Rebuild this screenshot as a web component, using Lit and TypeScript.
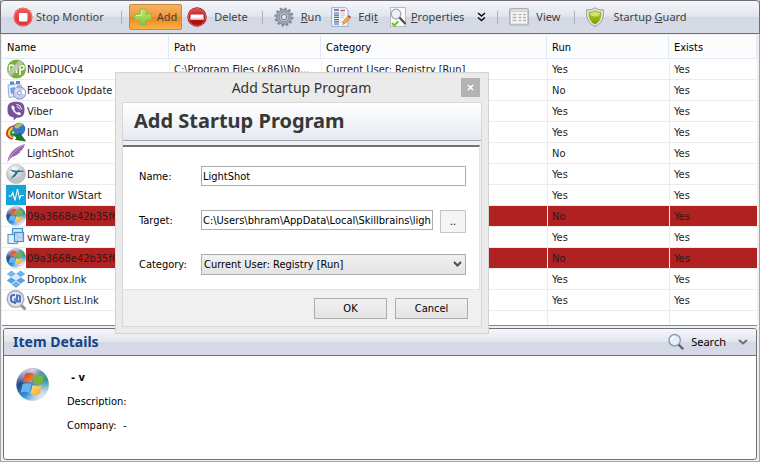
import { LitElement, html, css, svg, nothing, TemplateResult } from "lit";
import { customElement, state } from "lit/decorators.js";
import { classMap } from "lit/directives/class-map.js";

const icon = (size: number, body: TemplateResult) =>
  html`<svg class="icon" width=${size} height=${size} viewBox="0 0 20 20" aria-hidden="true">${body}</svg>`;

const stop = svg`
  <defs><linearGradient id="stop" x2="0" y2="1"><stop offset="0" stop-color="#ee5a5a"/><stop offset="1" stop-color="#d92f33"/></linearGradient></defs>
  <circle cx="10" cy="10" r="9.5" fill="url(#stop)"/><circle cx="10" cy="10" r="8.6" fill="none" stroke="#f08080" stroke-width=".8"/>
  <rect x="6" y="6" width="8.5" height="8.5" rx="1" fill="#fff"/>`;

const plus = svg`
  <defs><linearGradient id="plus" x2="0" y2="1"><stop offset="0" stop-color="#c3e67a"/><stop offset="1" stop-color="#83c834"/></linearGradient></defs>
  <path d="M7 2h6v5h5.500v6H13v5H7v-5H1.500V7H7z" fill="url(#plus)" stroke="#8fb94a" stroke-width="1" stroke-linejoin="round"/>
  <path d="M8.500 3.500v5H3" fill="none" stroke="#d9f2a0" stroke-width="1"/>`;

const remove = svg`
  <defs><linearGradient id="del" x2="0" y2="1"><stop offset="0" stop-color="#e65a5a"/><stop offset=".45" stop-color="#c4161c"/><stop offset="1" stop-color="#a8060c"/></linearGradient></defs>
  <circle cx="10" cy="10" r="9.700" fill="#9e1015"/><circle cx="10" cy="10" r="8.600" fill="url(#del)" stroke="#e88" stroke-width=".6"/>
  <rect x="3.500" y="7.500" width="13" height="5" rx=".6" fill="#fff"/><rect x="3.500" y="10.500" width="13" height="2" fill="#e8dcdc"/>`;

const gear = svg`
  <circle cx="10" cy="10" r="8.300" fill="none" stroke="#858a99" stroke-width="2.600" stroke-dasharray="2.300 2.046"/>
  <circle cx="10" cy="10" r="7.500" fill="#a3a7b4" stroke="#7c8190" stroke-width=".8"/>
  <circle cx="10" cy="10" r="5" fill="#b9bdc9" stroke="#8a8f9e" stroke-width="1"/>
  <circle cx="10" cy="10" r="2.600" fill="#e4e7f0" stroke="#757a8a" stroke-width="1"/>`;

const edit = svg`
  <path d="M.7.700h14l2.300 2.300v16.300H.700z" fill="#f4f9ff" stroke="#8fb0d4"/>
  <path d="M3 3h5" stroke="#5b6f96" stroke-width="1.600"/><path d="M9.500 3.500H14" stroke="#c24a4a" stroke-width="1.400"/>
  <path d="M3 6h5M3 8.200h5M3 10.400h5M3 12.600h5M3 14.800h5M3 17h5" stroke="#4a5f8f" stroke-width="1.200"/>
  <path d="M9.500 6h4.500M9.500 8.200h4.500M9.500 10.400h3M9.500 14.800h4" stroke="#b9c8df" stroke-width="1.200"/>
  <path d="M11.500 17.500l1-3.500 4.800-5.300 2.200 2-5 5.500z" fill="#f5a93a" stroke="#c9792a" stroke-width=".6"/><path d="M17.300 8.700l2.200 2" stroke="#b5563c" stroke-width="1.600"/>`;

const properties = svg`
  <rect x="2.500" y=".500" width="15" height="19" fill="#fafafa" stroke="#b9bbbf"/>
  <circle cx="8" cy="7" r="4.800" fill="#edf3f8" stroke="#a4a8ad" stroke-width="1.300"/>
  <path d="M11.500 10.500l6 6.500" stroke="#4a4a4d" stroke-width="2.200"/>
  <path d="M4 16l2.300 2.500 4-4.300" fill="none" stroke="#6cc02c" stroke-width="2"/>`;

const view = svg`
  <rect x=".5" y="1.500" width="19" height="16.500" rx="1" fill="#c9cacc" stroke="#b1b2b5"/>
  <rect x="2" y="5" width="16" height="11.500" fill="#f8f8f8"/>
  <path d="M2 3.200h16" stroke="#e8e8e8" stroke-width="1.200"/>
  <path d="M3.500 7.500h4M3.500 10.500h4M3.500 13.500h4" stroke="#b4b5b8" stroke-width="1.600"/>
  <path d="M9.500 7.500h3M9.500 10.500h3M9.500 13.500h3M14 7.500h3M14 10.500h3M14 13.500h3" stroke="#b4b5b8" stroke-width="1.300"/>`;

const shield = svg`
  <defs><linearGradient id="shield" x2="0" y2="1"><stop offset="0" stop-color="#c5d94a"/><stop offset=".5" stop-color="#9cba12"/><stop offset="1" stop-color="#7c9a06"/></linearGradient></defs>
  <path d="M9 .8C6.500 2.800 3.500 3 .8 2.800c-1 7 1 13.500 8.200 16.700 7.200-3.200 9.200-9.700 8.200-16.700C14.500 3 11.500 2.800 9 .8z" fill="#e9ebe6" stroke="#8c9093" stroke-width=".9"/>
  <path d="M9 3.500C7 4.800 5 5.200 3 5c-.4 5.500 1.200 9.700 6 12.300 4.800-2.600 6.400-6.800 6-12.300-2 .2-4-.2-6-1.500z" fill="url(#shield)" stroke="#869d1a" stroke-width=".6"/>
  <path d="M4 6.200c2 0 3.500-.5 5-1.300 1.500.8 3 1.300 5 1.300 0 2-3 3.300-5 3.300s-5-1.300-5-3.300z" fill="#e3ee98" opacity=".7"/>`;

const noip = svg`
  <circle cx="10.500" cy="10" r="9.500" fill="#79b13c"/>
  <path d="M3.500 12V7.500c0-2 4-2 4 0V12M10.500 6v8M14 16V8c0-2 4-2 4 .5S15 11 14 11" fill="none" stroke="#fff" stroke-width="1.500"/>
  <path d="M1.500 13.500L13 1.500l4.500 2L5 17.500z" fill="#c3c6c1" opacity=".85"/>`;

const installer = svg`
  <path d="M2 5l10-1.500V16L3 17.500z" fill="#e9f1fa" stroke="#7b98b9" stroke-width=".8"/>
  <path d="M4 1.500h4v3H4zM10 1h4v3h-4z" fill="#4f8de0"/><path d="M4 8l5-1v6l-4 1z" fill="#6da7ea"/>
  <path d="M12 3.500l4 1.500v10l-4 1z" fill="#b2c5dc"/>
  <circle cx="13.500" cy="13" r="6.200" fill="#c8cff2" stroke="#6a78b8" stroke-width=".8"/>
  <path d="M13.500 13L18 9.500a6 6 0 0 1 1 5z" fill="#fff"/><path d="M13.500 13L8 11a6 6 0 0 1 3-3.500z" fill="#e7d9fa"/>
  <circle cx="13.500" cy="13" r="1.800" fill="#fff" stroke="#7080c0" stroke-width=".7"/>`;

const viber = svg`
  <path d="M10 .8c6.500 0 8.500 2.200 8.500 8 0 6-2.500 8-8 8l-2.800 2.800v-3.100C3.200 15.600 1.500 13.700 1.500 8.800c0-5.800 2-8 8.500-8z" fill="#7a509e"/>
  <path d="M6.800 4.200c-1.500.6-1.700 1.800-1 3.300 1.300 2.900 3.400 5 6.200 6.200 1.400.6 2.500.2 3-1.300l-2.300-1.700-1.200 1.100c-1.700-.7-2.800-1.900-3.400-3.500l1-1.200z" fill="#fff"/>
  <path d="M10.500 3.500c3 .2 4.700 2 4.800 5M10.700 5.600c1.700.2 2.500 1.100 2.600 2.700" fill="none" stroke="#fff" stroke-width="1"/>`;

const idman = svg`
  <path d="M0 12C0 6.500 5 2.500 10 3.500L7 8c-2 1-2 4 1 6l-1.500 3.500C3 17.500.5 15 0 12z" fill="#d8362c"/>
  <path d="M2 12c-.5-4 3-7.500 7-7.500l-2 4c-2 1-2 4 1 5.500l-1 2c-3 0-4.700-2-5-4z" fill="#f5cf2a"/>
  <path d="M4 12c-.3-2.500 1-4.500 4-5l-1 2c-1.500 1-1 3 1 4.500l-1 1.500c-1.800-.3-2.800-1.500-3-3z" fill="#2f9a3c"/>
  <circle cx="13" cy="7" r="6.300" fill="#3877c8"/><path d="M8.500 4.500c1.500-3.500 5.500-4 8-2 .5 2-3 1-3.500 3.500-2.500 1-4.500.5-4.500-1.500z" fill="#b5c468"/>
  <path d="M6.500 11.500l6.500 2 .5-2.500 6 8-10-1.500 1.500-1.500z" fill="#14801c" stroke="#0a4f12" stroke-width=".7"/>`;

const feather = svg`
  <path d="M1.500 18.800C2 13 7 4 18.800 1c-.5 3-2 5-3.300 6.500l-1.700.6.6.6c-1.700 2-4 3.500-6.900 4.800-2 1-3.700 2.500-6 5.300z" fill="#9a62b4"/>
  <path d="M2 18.500C5 12 10 6 18 1.500" fill="none" stroke="#cfa6dc" stroke-width="1"/>`;

const dashlane = svg`
  <defs><radialGradient id="dash" cx=".4" cy=".3"><stop offset="0" stop-color="#fff"/><stop offset="1" stop-color="#bfc4c6"/></radialGradient></defs>
  <circle cx="10" cy="10" r="9.500" fill="url(#dash)" stroke="#b3b8ba" stroke-width=".7"/>
  <path d="M4 5.200c2 1 4.500 1.400 7.500 1.500l1.500-1.500.8 1.600h3.700l-.3 1.200h-4.700L9.500 12l-5.300 3.200 5.200-6.700C7 8 5 7 4 5.200z" fill="#23798c"/>`;

const monitor = svg`
  <rect width="20" height="20" fill="#12a5dc"/>
  <path d="M2.500 11h2.800l1.500-3.500L9 15.500 11.500 4l2 9.500 1.500-3h3" fill="none" stroke="#fff" stroke-width="1.100"/>`;

const orb = svg`
  <defs>
    <linearGradient id="orb" x1=".1" y1=".1" x2=".7" y2="1"><stop offset="0" stop-color="#a9a3c8"/><stop offset=".3" stop-color="#1f4a8c"/><stop offset=".65" stop-color="#2f93d6"/><stop offset="1" stop-color="#c8d8f4"/></linearGradient>
    <radialGradient id="orbTop" cx=".5" cy="0" r=".6"><stop offset="0" stop-color="#e4d5e4"/><stop offset="1" stop-color="#e4d5e4" stop-opacity="0"/></radialGradient>
    <radialGradient id="orbTeal" cx="1" cy=".35" r=".5"><stop offset="0" stop-color="#2f9a8a"/><stop offset="1" stop-color="#2f9a8a" stop-opacity="0"/></radialGradient>
    <radialGradient id="orbRight" cx=".85" cy=".9" r=".55"><stop offset="0" stop-color="#f0e4f6"/><stop offset="1" stop-color="#e0e0f4" stop-opacity="0"/></radialGradient>
    <linearGradient id="orbRed" x2="1" y2="1"><stop offset="0" stop-color="#d8351c"/><stop offset="1" stop-color="#f59a3c"/></linearGradient>
    <linearGradient id="orbYellow" x2="1" y2="1"><stop offset="0" stop-color="#ffe27a"/><stop offset="1" stop-color="#f5a81c"/></linearGradient>
  </defs>
  <circle cx="10" cy="10" r="9.800" fill="url(#orb)"/><circle cx="10" cy="10" r="9.800" fill="url(#orbTop)"/>
  <circle cx="10" cy="10" r="9.800" fill="url(#orbTeal)"/><circle cx="10" cy="10" r="9.800" fill="url(#orbRight)"/>
  <path d="M5.500 3.700c1.900-1.100 3.700-1.100 5.300-.1L9.600 9c-1.600-.9-3.400-.9-5.400 0z" fill="url(#orbRed)"/>
  <path d="M11.500 4c1.900 1 3.700 1 5.600 0l-1.300 5.400c-1.900.9-3.700.9-5.500-.1z" fill="#78b637"/>
  <path d="M4 9.900c1.900-.9 3.700-.9 5.400 0l-1.300 5.300c-1.700-1-3.400-1-5.300 0z" fill="#6ab4ea"/>
  <path d="M10.100 10.300c1.800.9 3.600.9 5.500 0l-1.300 5.300c-1.900 1-3.700.9-5.500-.1z" fill="url(#orbYellow)"/>`;

const vmware = svg`
  <rect x="6.500" y="1.500" width="10" height="9.500" fill="#cfe4f7" stroke="#4b8fc9" stroke-width="1.200"/>
  <rect x="2" y="7.500" width="9.500" height="9" fill="#e3effa" stroke="#5b9ad0" stroke-width="1.200"/>
  <rect x="8.500" y="5.500" width="9" height="9" fill="#b9d8f2" fill-opacity=".8" stroke="#4b8fc9" stroke-width="1.200"/>`;

const dropbox = svg`
  <path d="M5.500 1.500L10 5l-4.800 3.200L.700 5z" fill="#79b9ea"/><path d="M14.500 1.500L19.300 5l-4.500 3.200L10 5z" fill="#6fb2e6"/>
  <path d="M5.200 8.200L10 11.300l-4.500 3.400-4.800-3.200z" fill="#5ba4dd"/><path d="M14.800 8.200l4.500 3.300-4.800 3.200-4.500-3.400z" fill="#5ba4dd"/>
  <path d="M10 5l4.800 3.200-4.800 3.100-4.800-3.100z" fill="#d9ecfa"/><path d="M5.500 15.500L10 12.300l4.500 3.200L10 19z" fill="#6fb2e6"/>`;

const shortlist = svg`
  <path d="M14.500 14.500l4 4" stroke="#8b8f96" stroke-width="3" stroke-linecap="round"/>
  <circle cx="9.500" cy="9" r="8.300" fill="#dfe5f2" stroke="#a9adb5" stroke-width="1.500"/>
  <path d="M9 5H6.500L5 6.500v4L6.500 12H9v2M9 8.500v2M11 4.500v7h3V6.500L12.500 5" fill="none" stroke="#4a6fc4" stroke-width="1.900"/>`;

const search = svg`
  <circle cx="8.500" cy="8" r="6.300" fill="#e3effd" stroke="#8b99ad" stroke-width="1.500"/>
  <path d="M4.500 8a4 4 0 0 1 4-4" fill="none" stroke="#fff" stroke-width="1.500"/>
  <path d="M13 13l5 5" stroke="#5c5f66" stroke-width="2.500"/>`;

interface Program {
  name: string;
  icon: TemplateResult;
  path?: string;
  category?: string;
  run: boolean;
  missing?: boolean;
}

const programs: Program[] = [
  { name: "NoIPDUCv4", icon: noip, path: "C:\\Program Files (x86)\\No...", category: "Current User: Registry [Run]", run: true },
  { name: "Facebook Update", icon: installer, run: false },
  { name: "Viber", icon: viber, run: true },
  { name: "IDMan", icon: idman, run: true },
  { name: "LightShot", icon: feather, run: false },
  { name: "Dashlane", icon: dashlane, run: true },
  { name: "Monitor WStart", icon: monitor, run: true },
  { name: "09a3668e42b35f6", icon: orb, run: false, missing: true },
  { name: "vmware-tray", icon: vmware, run: true },
  { name: "09a3668e42b35f6", icon: orb, run: false, missing: true },
  { name: "Dropbox.lnk", icon: dropbox, run: true },
  { name: "VShort List.lnk", icon: shortlist, run: true },
];

@customElement("app-root")
export class AppRoot extends LitElement {
  @state() private dialogOpen = true;

  static styles = css`
    :host {
      display: flex;
      flex-direction: column;
      box-sizing: border-box;
      position: relative;
      min-height: 100vh;
      background: #f0f0f0;
      border: 1px solid #a6a6a8;
      border-width: 0 1px 1px;
      color: #000;
      font: 11px/14px "DejaVu Sans Condensed", "DejaVu Sans", sans-serif;
      font-stretch: condensed;
    }
    *, *::before { box-sizing: border-box; }
    button, input, select { font: inherit; color: inherit; margin: 0; }
    .icon { display: block; flex: none; }

    .toolbar {
      display: flex;
      align-items: center;
      height: 34px;
      margin: 0 -1px;
      padding: 0 11px;
      border: 1px solid #6f6c76;
      border-radius: 4px 4px 0 0;
      background: linear-gradient(#f6f7fa, #e1e5ed 48%, #d3d8e4 50%, #d6dbe7);
      color: #3f4248;
      font: 11px/16px "Noto Sans", sans-serif;
      white-space: nowrap;
    }
    .tool {
      display: flex;
      align-items: center;
      gap: 7px;
      height: 26px;
      padding: 0;
      border: 1px solid transparent;
      border-radius: 2px;
      background: none;
    }
    .tool.tight { gap: 3px; }
    .tool + .tool { margin-left: 8px; }
    .tool.active {
      gap: 4px;
      padding: 0 4px 0 3px;
      border-color: #c98a3c;
      background: linear-gradient(#f5b366, #f19a3a 48%, #ee8413 50%, #fbb14a);
    }
    .tool.active + .tool { margin-left: 4px; }
    .sep { width: 1px; height: 13px; margin: 0 10px 0 13px; background: #b0b2b8; }
    .sep.lead { margin: 0 7px 0 16px; }
    .more { display: flex; margin-left: 12px; padding: 0; border: 0; background: none; }
    .more + .sep { margin-left: 11px; }

    .list { flex: 1; margin: 1px 2px 0 1px; background: #fff; border-bottom: 1px solid #85878c; }
    table { width: 100%; table-layout: fixed; border-spacing: 0; }
    .c-name { width: 167px; }
    .c-path { width: 152px; }
    .c-run { width: 122px; }
    .c-exists { width: 88px; }
    th {
      height: 24px;
      padding: 2px 5px 0;
      border-right: 1px solid #dfeaf8;
      border-bottom: 1px solid #dfeaf8;
      background: #fcfcfc;
      font-weight: normal;
      text-align: left;
    }
    td {
      height: 21px;
      padding: 2px 4px 0;
      border-left: 1px solid #ececec;
      border-bottom: 1px solid #ececec;
      background-clip: padding-box;
      color: #1c1c28;
      white-space: nowrap;
      overflow: hidden;
    }
    td:first-child { padding: 0; border-left: 0; }
    .name { display: flex; padding-left: 4px; }
    .label { flex: 1; height: 20px; padding-left: 1px; line-height: 22px; overflow: hidden; }
    .missing td { color: #2c1a1a; }
    .missing .label, .missing td:not(:first-child) { background-color: #b02121; }
    .filler td { height: 14px; border-bottom: 0; }

    .details { margin: 2px 2px 1px; min-height: 132px; border: 1px solid #6f7178; border-radius: 3px; background: #fff; }
    .details header {
      display: flex;
      align-items: center;
      justify-content: space-between;
      height: 27px;
      padding: 0 8px 0 9px;
      border-bottom: 1px solid #6f7178;
      border-radius: 2px 2px 0 0;
      background: linear-gradient(#f6f7fa, #e1e5ed 48%, #d3d8e4 50%, #d6dbe7);
    }
    h2 { margin: 0; color: #15428b; font: bold 14px/18px "Noto Sans", sans-serif; }
    .search {
      display: flex;
      align-items: center;
      gap: 6px;
      padding: 0;
      border: 0;
      background: none;
      font: 11px/16px "Noto Sans", sans-serif;
    }
    .search .caret { margin-left: 6px; }
    .info { display: flex; gap: 18px; padding: 12px; }
    .facts { display: grid; gap: 10px; padding-top: 3px; }
    .facts p { margin: 0; white-space: pre; }
    .facts .title { padding-left: 4px; font-weight: bold; }

    .dialog {
      position: absolute;
      top: 72px;
      left: 114px;
      width: 374px;
      margin: 0;
      padding: 0 6px 6px;
      border: 1px solid #d2d2d2;
      background: #ebebeb;
      color: #000;
    }
    .caption { display: flex; align-items: center; height: 29px; padding-right: 2px; }
    .caption span { flex: 1; padding-left: 20px; text-align: center; color: #333; font: 14px/20px "Noto Sans", sans-serif; }
    .close { display: flex; align-items: center; justify-content: center; width: 19px; height: 19px; padding: 0; border: 0; background: #b3b3b3; }
    .frame { border: 1px solid #d8d8d8; background: #f0f0f0; }
    .banner {
      height: 38px;
      margin-bottom: 4px;
      padding: 0 11px;
      border-bottom: 1px solid #a0a6b0;
      background: linear-gradient(#fff, #e6eaf1);
    }
    h1 { margin: 0; color: #383838; font: bold 20px/36px "Noto Sans", sans-serif; }
    .form {
      display: grid;
      grid-template-columns: 62px 1fr;
      row-gap: 24px;
      align-items: start;
      margin-right: 1px;
      padding: 19px 13px 14px 16px;
      border: 1px solid #e2e2e2;
      border-width: 2px 1px 1px 0;
      border-top-color: #727272;
      background: #fff;
    }
    .form label { height: 20px; line-height: 22px; }
    .form input, .form select {
      min-width: 0;
      width: 100%;
      height: 20px;
      padding: 0 1px;
      border: 1px solid #abadb3;
      border-radius: 0;
      background: #fff;
      outline: 0;
    }
    .target { display: flex; align-items: flex-start; gap: 7px; height: 20px; }
    .target input { flex: 1; }
    .push { height: 21px; padding: 0; border: 1px solid #acacac; background: linear-gradient(#f1f1f1, #e4e4e4); text-align: center; }
    .browse { width: 26px; height: 23px; border-color: #c4c4c4; background: #f4f4f4; }
    .pick { position: relative; }
    .form .pick select { display: block; height: 21px; padding: 0 2px; appearance: none; background: linear-gradient(#f1f1f1, #e3e3e3); }
    .pick svg { position: absolute; right: 4px; top: 7px; pointer-events: none; }
    .actions { display: flex; justify-content: flex-end; gap: 8px; padding: 8px 13px 7px; }
    .actions .push { width: 73px; }
  `;

  private tool(img: TemplateResult, label: unknown, classes = {}) {
    return html`<button type="button" class=${classMap({ tool: true, ...classes })}>
      ${icon(20, img)}<span>${label}</span>
    </button>`;
  }

  private row(p: Program) {
    return html`<tr class=${p.missing ? "missing" : ""}>
      <td><div class="name">${icon(20, p.icon)}<span class="label">${p.name}</span></div></td>
      <td>${p.path ?? nothing}</td>
      <td>${p.category ?? nothing}</td>
      <td>${p.run ? "Yes" : "No"}</td>
      <td>Yes</td>
    </tr>`;
  }

  private close = () => {
    this.dialogOpen = false;
  };

  private dialog() {
    return html`<dialog class="dialog" open aria-label="Add Startup Program">
      <div class="caption">
        <span>Add Startup Program</span>
        <button type="button" class="close" aria-label="Close" @click=${this.close}>
          <svg width="7" height="7" viewBox="0 0 7 7"><path d="M1 1l5 5M6 1L1 6" stroke="#fff" stroke-width="1.600"/></svg>
        </button>
      </div>
      <div class="frame">
        <div class="banner"><h1>Add Startup Program</h1></div>
        <div class="form">
          <label for="name">Name:</label>
          <input id="name" type="text" value="LightShot" />
          <label for="target">Target:</label>
          <div class="target">
            <input id="target" type="text" value="C:\\Users\\bhram\\AppData\\Local\\Skillbrains\\lights" />
            <button type="button" class="push browse">..</button>
          </div>
          <label for="category">Category:</label>
          <div class="pick">
            <select id="category"><option>Current User: Registry [Run]</option></select>
            <svg width="9" height="7" viewBox="0 0 9 7"><path d="M1 1l3.500 3.500L8 1" fill="none" stroke="#4c4c4c" stroke-width="2"/></svg>
          </div>
        </div>
        <div class="actions">
          <button type="button" class="push" @click=${this.close}>OK</button>
          <button type="button" class="push" @click=${this.close}>Cancel</button>
        </div>
      </div>
    </dialog>`;
  }

  render() {
    return html`
      <nav class="toolbar" aria-label="Tools">
        ${this.tool(stop, "Stop Montior", { tight: true })}
        <span class="sep lead"></span>
        ${this.tool(plus, "Add", { active: true })}
        ${this.tool(remove, "Delete")}
        <span class="sep"></span>
        ${this.tool(gear, html`<u>R</u>un`)}
        ${this.tool(edit, html`Edi<u>t</u>`)}
        ${this.tool(properties, html`<u>P</u>roperties`, { tight: true })}
        <button type="button" class="more" aria-label="More">
          <svg width="9" height="10" viewBox="0 0 9 10"><path d="M1 1l3.500 3L8 1M1 5.500l3.500 3L8 5.500" fill="none" stroke="#111" stroke-width="1.600"/></svg>
        </button>
        <span class="sep"></span>
        ${this.tool(view, "View")}
        <span class="sep"></span>
        ${this.tool(shield, html`Startup <u>G</u>uard`)}
      </nav>

      <section class="list">
        <table>
          <colgroup>
            <col class="c-name" /><col class="c-path" /><col /><col class="c-run" /><col class="c-exists" />
          </colgroup>
          <thead>
            <tr><th>Name</th><th>Path</th><th>Category</th><th>Run</th><th>Exists</th></tr>
          </thead>
          <tbody>
            ${programs.map((p) => this.row(p))}
            <tr class="filler" aria-hidden="true"><td></td><td></td><td></td><td></td><td></td></tr>
          </tbody>
        </table>
      </section>

      <section class="details">
        <header>
          <h2>Item Details</h2>
          <button type="button" class="search">
            ${icon(18, search)}<span>Search</span>
            <svg class="caret" width="10" height="6" viewBox="0 0 10 6"><path d="M1 1l4 3.500L9 1" fill="none" stroke="#6b6f78" stroke-width="2"/></svg>
          </button>
        </header>
        <div class="info">
          ${icon(33, orb)}
          <div class="facts">
            <p class="title">- v</p>
            <p>Description:</p>
            <p>Company:  -</p>
          </div>
        </div>
      </section>

      ${this.dialogOpen ? this.dialog() : nothing}
    `;
  }
}
